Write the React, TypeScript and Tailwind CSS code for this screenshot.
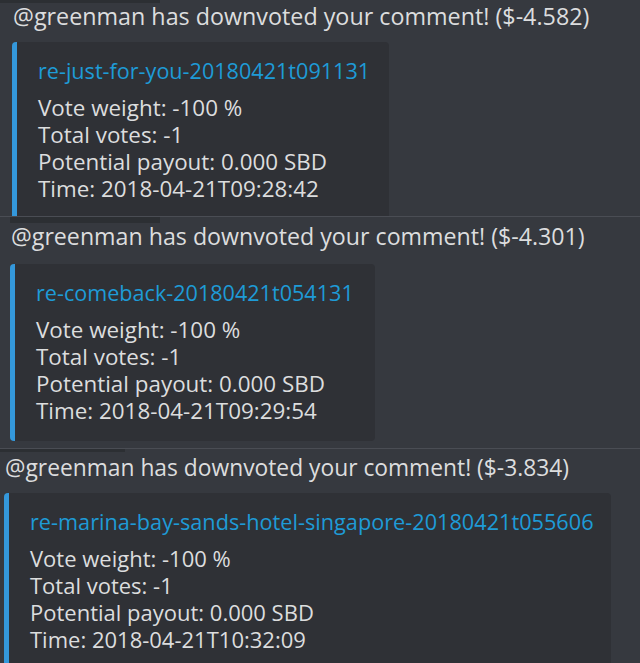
import React from 'react';

type Vote = {
  amount: string;
  permlink: string;
  time: string;
};

const font = { fontFamily: '"Open Sans", "Noto Sans", sans-serif' };

const Embed = ({ vote, className, small }: { vote: Vote; className: string; small?: boolean }) => {
  return (
    <div className={`rounded-[4px] border-l-[5px] border-[#3498db] bg-[#2f3136] pl-[21px] pt-[15px] ${className}`}>
      <a href="#" className={`block leading-[27px] text-[#1e9bd7] ${small ? 'text-[21.7px]' : 'text-[21.6px]'}`}>
        {vote.permlink}
      </a>
      <div className={`mt-[10px] leading-[27px] text-[#dcddde] ${small ? 'text-[22px]' : 'text-[22.4px]'}`}>
        <div>Vote weight: -100 %</div>
        <div>Total votes: -1</div>
        <div>Potential payout: 0.000 SBD</div>
        <div>Time: {vote.time}</div>
      </div>
    </div>
  );
};

const Header = ({ amount, className }: { amount: string; className: string }) => (
  <p className={`leading-[27px] text-[#dcddde] ${className}`}>
    @greenman has downvoted your comment! (${amount})
  </p>
);

const App = () => {
  return (
    <div className="w-[640px] h-[663px] overflow-hidden bg-[#36393f]" style={font}>
      {/* first crop */}
      <section className="relative h-[216px] overflow-hidden">
        <div className="absolute left-0 top-0 h-[3px] w-[160px] bg-[#2c2f33]" />
        <Header amount="-4.582" className="pl-[13px] pt-[3px] text-[23.3px]" />
        <Embed
          vote={{ amount: '-4.582', permlink: 're-just-for-you-20180421t091131', time: '2018-04-21T09:28:42' }}
          className="ml-[12px] mt-[12px] w-[377px] pb-[24px]"
        />
      </section>

      {/* second crop */}
      <section className="relative h-[232px] overflow-hidden border-t border-[#4a4d54]">
        <div className="absolute left-[10px] top-0 h-[6px] w-[150px] bg-[#2c2f33]" />
        <Header amount="-4.301" className="pl-[11px] pt-[6px] text-[23.2px]" />
        <Embed
          vote={{ amount: '-4.301', permlink: 're-comeback-20180421t054131', time: '2018-04-21T09:29:54' }}
          className="ml-[10px] mt-[14px] w-[365px] pb-[17px]"
        />
      </section>

      {/* third crop */}
      <section className="relative h-[215px] overflow-hidden border-t border-[#4a4d54]">
        <div className="absolute left-0 top-0 h-[3px] w-[125px] bg-[#2c2f33]" />
        <Header amount="-3.834" className="pl-[5px] pt-[5px] text-[22.8px]" />
        <Embed
          small
          vote={{ amount: '-3.834', permlink: 're-marina-bay-sands-hotel-singapore-20180421t055606', time: '2018-04-21T10:32:09' }}
          className="ml-[4px] mt-[12px] w-[607px] pb-[20px]"
        />
      </section>
    </div>
  );
};

export default App;
